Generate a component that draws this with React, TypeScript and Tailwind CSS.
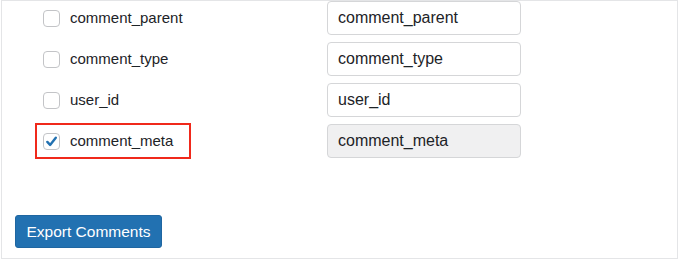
// App.tsx
// Export settings fragment: field rows (checkbox + label ↔ column name input) and an export button.

const FIELDS = [
  { name: "comment_parent", checked: false },
  { name: "comment_type", checked: false },
  { name: "user_id", checked: false },
  { name: "comment_meta", checked: true },
];

function Checkbox({ checked }: { checked: boolean }) {
  return (
    <span className="flex h-[17px] w-[17px] shrink-0 items-center justify-center rounded-[4px] border border-[#c3c4c7] bg-white">
      {checked && (
        <svg width="13" height="13" viewBox="0 0 13 13" fill="none">
          <path
            d="M2.3 6.9 L5.1 9.9 L10.8 2.7"
            stroke="#2271b1"
            strokeWidth="2.4"
            strokeLinecap="round"
            strokeLinejoin="round"
          />
        </svg>
      )}
    </span>
  );
}

export default function App() {
  return (
    <div
      className="h-[268px] w-[680px] bg-white"
      style={{ fontFamily: '"Liberation Sans", Arial, sans-serif' }}
    >
      {/* card */}
      <div className="ml-[1px] flex h-[259px] w-[677px] flex-col border border-[#e4e5e7] bg-white">
        <div className="flex flex-col gap-[7px]">
          {FIELDS.map(({ name, checked }) => (
            <div key={name} className="flex h-[34px] items-center">
              <div className="w-[325px] pl-[33px]">
                {/* last row is highlighted with a red box */}
                <label
                  className={`flex h-[36px] w-[156px] items-center gap-[10px] border-2 pl-[6px] ${
                    checked ? "border-[#f0291b]" : "border-transparent"
                  }`}
                >
                  <Checkbox checked={checked} />
                  <span className="text-[15px] text-[#1d2327]">{name}</span>
                </label>
              </div>
              <div
                className={`flex h-[34px] w-[194px] items-center rounded-[4px] border pl-[10px] text-[16px] text-[#1d2327] ${
                  checked
                    ? "border-[#d5d6d8] bg-[#f0f0f1]"
                    : "border-[#d5d6d8] bg-white"
                }`}
              >
                {name}
              </div>
            </div>
          ))}
        </div>

        <button className="ml-[13px] mt-[57px] flex h-[33px] w-[147px] items-center justify-center rounded-[3px] border border-[#1f66a1] bg-[#2271b1] text-[15.5px] text-white">
          Export Comments
        </button>
      </div>
    </div>
  );
}
